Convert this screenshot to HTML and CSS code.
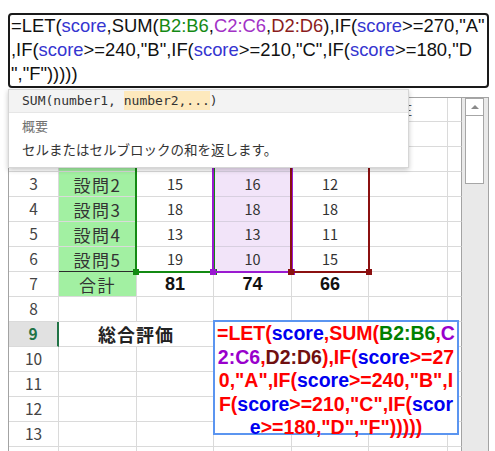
FILE: index.html
```html
<!DOCTYPE html>
<html lang="ja">
<head>
<meta charset="utf-8">
<title>LET formula</title>
<link rel="stylesheet" href="styles.css">
</head>
<body>
<div class="page">
  <div class="formula-bar">
    <div class="fb-line">=LET(<span class="s">score</span>,SUM(<span class="g">B2:B6</span>,<span class="p">C2:C6</span>,<span class="r">D2:D6</span>),IF(<span class="s">score</span>&gt;=270,"A"</div>
    <div class="fb-line">,IF(<span class="s">score</span>&gt;=240,"B",IF(<span class="s">score</span>&gt;=210,"C",IF(<span class="s">score</span>&gt;=180,"D</div>
    <div class="fb-line">","F")))))</div>
  </div>

  <div class="sheet">
    <div class="grid">
      <!-- header row (mostly under the tooltip) -->
      <div class="c hd"></div><div class="c hd"></div><div class="c hd"></div><div class="c hd"></div><div class="c hd"></div><div class="c hd">E</div><div class="c hd last"></div>
      <!-- 1 -->
      <div class="c rh"></div><div class="c lab"></div><div class="c"></div><div class="c"></div><div class="c"></div><div class="c"></div><div class="c last"></div>
      <!-- 2 -->
      <div class="c rh"></div><div class="c lab"></div><div class="c"></div><div class="c pf"></div><div class="c"></div><div class="c"></div><div class="c last"></div>
      <!-- 3 -->
      <div class="c rh">3</div><div class="c lab">設問2</div><div class="c">15</div><div class="c pf">16</div><div class="c">12</div><div class="c"></div><div class="c last"></div>
      <!-- 4 -->
      <div class="c rh">4</div><div class="c lab">設問3</div><div class="c">18</div><div class="c pf">18</div><div class="c">18</div><div class="c"></div><div class="c last"></div>
      <!-- 5 -->
      <div class="c rh">5</div><div class="c lab">設問4</div><div class="c">13</div><div class="c pf">13</div><div class="c">11</div><div class="c"></div><div class="c last"></div>
      <!-- 6 -->
      <div class="c rh">6</div><div class="c lab lab-end">設問5</div><div class="c">19</div><div class="c pf">10</div><div class="c">15</div><div class="c"></div><div class="c last"></div>
      <!-- 7 -->
      <div class="c rh">7</div><div class="c lab">合計</div><div class="c tot">81</div><div class="c tot">74</div><div class="c tot">66</div><div class="c"></div><div class="c last"></div>
      <!-- 8 -->
      <div class="c rh">8</div><div class="c"></div><div class="c"></div><div class="c"></div><div class="c"></div><div class="c"></div><div class="c last"></div>
      <!-- 9 -->
      <div class="c rh sel">9</div><div class="c merged title">総合評価</div><div class="c"></div><div class="c"></div><div class="c"></div><div class="c last"></div>
      <!-- 10 -->
      <div class="c rh">10</div><div class="c"></div><div class="c"></div><div class="c"></div><div class="c"></div><div class="c"></div><div class="c last"></div>
      <!-- 11 -->
      <div class="c rh">11</div><div class="c"></div><div class="c"></div><div class="c"></div><div class="c"></div><div class="c"></div><div class="c last"></div>
      <!-- 12 -->
      <div class="c rh">12</div><div class="c"></div><div class="c"></div><div class="c"></div><div class="c"></div><div class="c"></div><div class="c last"></div>
      <!-- 13 -->
      <div class="c rh">13</div><div class="c"></div><div class="c"></div><div class="c"></div><div class="c"></div><div class="c"></div><div class="c last"></div>
      <!-- 14 (below the frame) -->
      <div class="c rh"></div><div class="c"></div><div class="c"></div><div class="c"></div><div class="c"></div><div class="c"></div><div class="c last"></div>

      <!-- range highlights -->
      <div class="rg rg-green"><span class="hdl hdl-l"></span><span class="hdl hdl-r"></span></div>
      <div class="rg rg-purple"><span class="hdl hdl-l"></span><span class="hdl hdl-r"></span></div>
      <div class="rg rg-red"><span class="hdl hdl-l"></span><span class="hdl hdl-r"></span></div>

      <!-- formula text box -->
      <div class="fbox">
        <div class="fl">=LET(<span class="bs">score</span>,SUM(<span class="bg">B2:B6</span>,<span class="bp">C</span></div>
        <div class="fl"><span class="bp">2:C6</span>,<span class="bd">D2:D6</span>),IF(<span class="bs">score</span>&gt;=27</div>
        <div class="fl">0,"A",IF(<span class="bs">score</span>&gt;=240,"B",I</div>
        <div class="fl">F(<span class="bs">score</span>&gt;=210,"C",IF(<span class="bs">scor</span></div>
        <div class="fl"><span class="bs">e</span>&gt;=180,"D","F")))))</div>
      </div>
    </div>

    <div class="scroll">
      <div class="thumb">
        <div class="up"><span class="tri"></span></div>
      </div>
    </div>

    <div class="popup">
      <div class="sig">SUM(number1, <span class="cur">number2,...</span>)</div>
      <div class="desc">
        <div class="dh">概要</div>
        <div class="dt">セルまたはセルブロックの和を返します。</div>
      </div>
    </div>
  </div>
</div>
</body>
</html>
```

FILE: styles.css
```css
* { box-sizing: border-box; }

html, body {
  margin: 0;
  padding: 0;
  background: #ffffff;
}

body {
  width: 495px;
  height: 451px;
  overflow: hidden;
  font-family: "Noto Sans CJK JP", "Noto Sans", sans-serif;
}

.page {
  padding-top: 13px;
}

/* ---------- formula bar ---------- */
.formula-bar {
  margin-left: 8px;
  width: 481px;
  height: 75px;
  border: 2px solid #1a1a1a;
  border-radius: 4px;
  padding-left: 1px;
  font-family: "Liberation Sans", Arial, sans-serif;
  font-size: 18.4px;
  line-height: 24px;
  color: #111111;
}

.fb-line {
  white-space: nowrap;
  margin-top: -1px;
  margin-bottom: 1px;
}

.s { color: #3535d0; }
.g { color: #148a14; }
.p { color: #a232c6; }
.r { color: #8b1d1d; }

/* ---------- sheet ---------- */
.sheet {
  position: relative;
  margin-top: 9px;
  margin-left: 8px;
  display: flex;
  align-items: flex-start;
}

.grid {
  position: relative;
  display: grid;
  grid-template-columns: 50px 78px 77px 78px 77px 79px 14px;
  grid-template-rows: 24px repeat(14, 25px);
  border-left: 1px solid #a3a3a3;
  border-top: 1px solid #a3a3a3;
}

.c {
  border-right: 1px solid #dadada;
  border-bottom: 1px solid #dadada;
  display: flex;
  align-items: center;
  justify-content: center;
  font-size: 14.5px;
  line-height: 1;
  color: #333333;
  white-space: nowrap;
  overflow: hidden;
}

.c.last {
  border-right-color: #a3a3a3;
}

.hd {
  font-size: 14px;
  color: #555555;
}

.rh {
  font-size: 15.5px;
  color: #444444;
}

.rh.sel {
  background: #e1e1e1;
  color: #217346;
  font-weight: bold;
  border-right: 2px solid #217346;
}

.lab {
  background: #a2f0a2;
  font-size: 17px;
  letter-spacing: 1.5px;
  color: #333333;
}

.lab-end {
  border-bottom-color: #2b2b2b;
}

.pf {
  background: #f2e4f9;
  border-bottom-color: #d8cfe0;
}

.tot {
  font-family: "Liberation Sans", Arial, sans-serif;
  font-weight: bold;
  font-size: 18px;
  color: #111111;
}

.merged {
  grid-column: span 2;
}

.title {
  font-weight: bold;
  font-size: 18px;
  letter-spacing: 1px;
  color: #222222;
}

/* ---------- range highlights ---------- */
.rg {
  position: absolute;
  pointer-events: none;
  border: 2px solid;
  top: -1px;
  left: -2px;
  right: -1px;
  bottom: -1px;
}

.rg-green {
  grid-area: 3 / 3 / 8 / 4;
  border-color: #138a13;
}

.rg-purple {
  grid-area: 3 / 4 / 8 / 5;
  border-color: #9a1ad0;
}

.rg-red {
  grid-area: 3 / 5 / 8 / 6;
  border-color: #8b1010;
}

.hdl {
  position: absolute;
  width: 6px;
  height: 6px;
  bottom: -4px;
}

.rg-green .hdl { background: #138a13; }
.rg-purple .hdl { background: #9a1ad0; }
.rg-red .hdl { background: #8b1010; }

.hdl-l { left: -4px; }
.hdl-r { right: -4px; }

/* ---------- floating formula text box ---------- */
.fbox {
  position: absolute;
  grid-area: 10 / 4 / 11 / 5;
  top: -2px;
  left: -1px;
  width: 246px;
  height: 115px;
  background: #ffffff;
  border: 2px solid #5b95f0;
  font-family: "Liberation Sans", Arial, sans-serif;
  font-weight: bold;
  font-size: 19.5px;
  line-height: 23.5px;
  color: #ff0000;
  text-align: center;
  z-index: 2;
}

.fl {
  white-space: nowrap;
}

.bs { color: #0000f0; }
.bg { color: #008000; }
.bp { color: #9900cc; }
.bd { color: #701010; }

/* ---------- scrollbar ---------- */
.scroll {
  width: 27px;
  height: 360px;
  background: #e9e9e9;
  border-top: 1px solid #a3a3a3;
  border-right: 1px solid #a3a3a3;
  padding-left: 3px;
}

.thumb {
  width: 19px;
  height: 86px;
  background: #ffffff;
  border: 1px solid #a6a6a6;
}

.up {
  height: 17px;
  border-bottom: 1px solid #a6a6a6;
  display: flex;
  align-items: center;
  justify-content: center;
}

.tri {
  width: 0;
  height: 0;
  border-left: 4px solid transparent;
  border-right: 4px solid transparent;
  border-bottom: 4px solid #8a8a8a;
}

/* ---------- function tooltip ---------- */
.popup {
  position: absolute;
  left: 0;
  top: -8px;
  width: 401px;
  height: 79px;
  background: #ffffff;
  border: 1px solid #d6d6d6;
  box-shadow: 0 2px 5px rgba(0, 0, 0, 0.22);
  z-index: 5;
}

.sig {
  height: 23px;
  background: #f3f3f3;
  border-bottom: 1px solid #e6e6e6;
  padding-left: 13px;
  font-family: "DejaVu Sans Mono", monospace;
  font-size: 13px;
  line-height: 22px;
  color: #333333;
  white-space: nowrap;
}

.cur {
  background: #fde9bd;
  padding: 2px 0;
}

.desc {
  padding: 2px 0 0 13px;
}

.dh {
  font-size: 13px;
  line-height: 22px;
  color: #707070;
}

.dt {
  font-size: 13.5px;
  line-height: 24px;
  color: #333333;
  white-space: nowrap;
}
```
